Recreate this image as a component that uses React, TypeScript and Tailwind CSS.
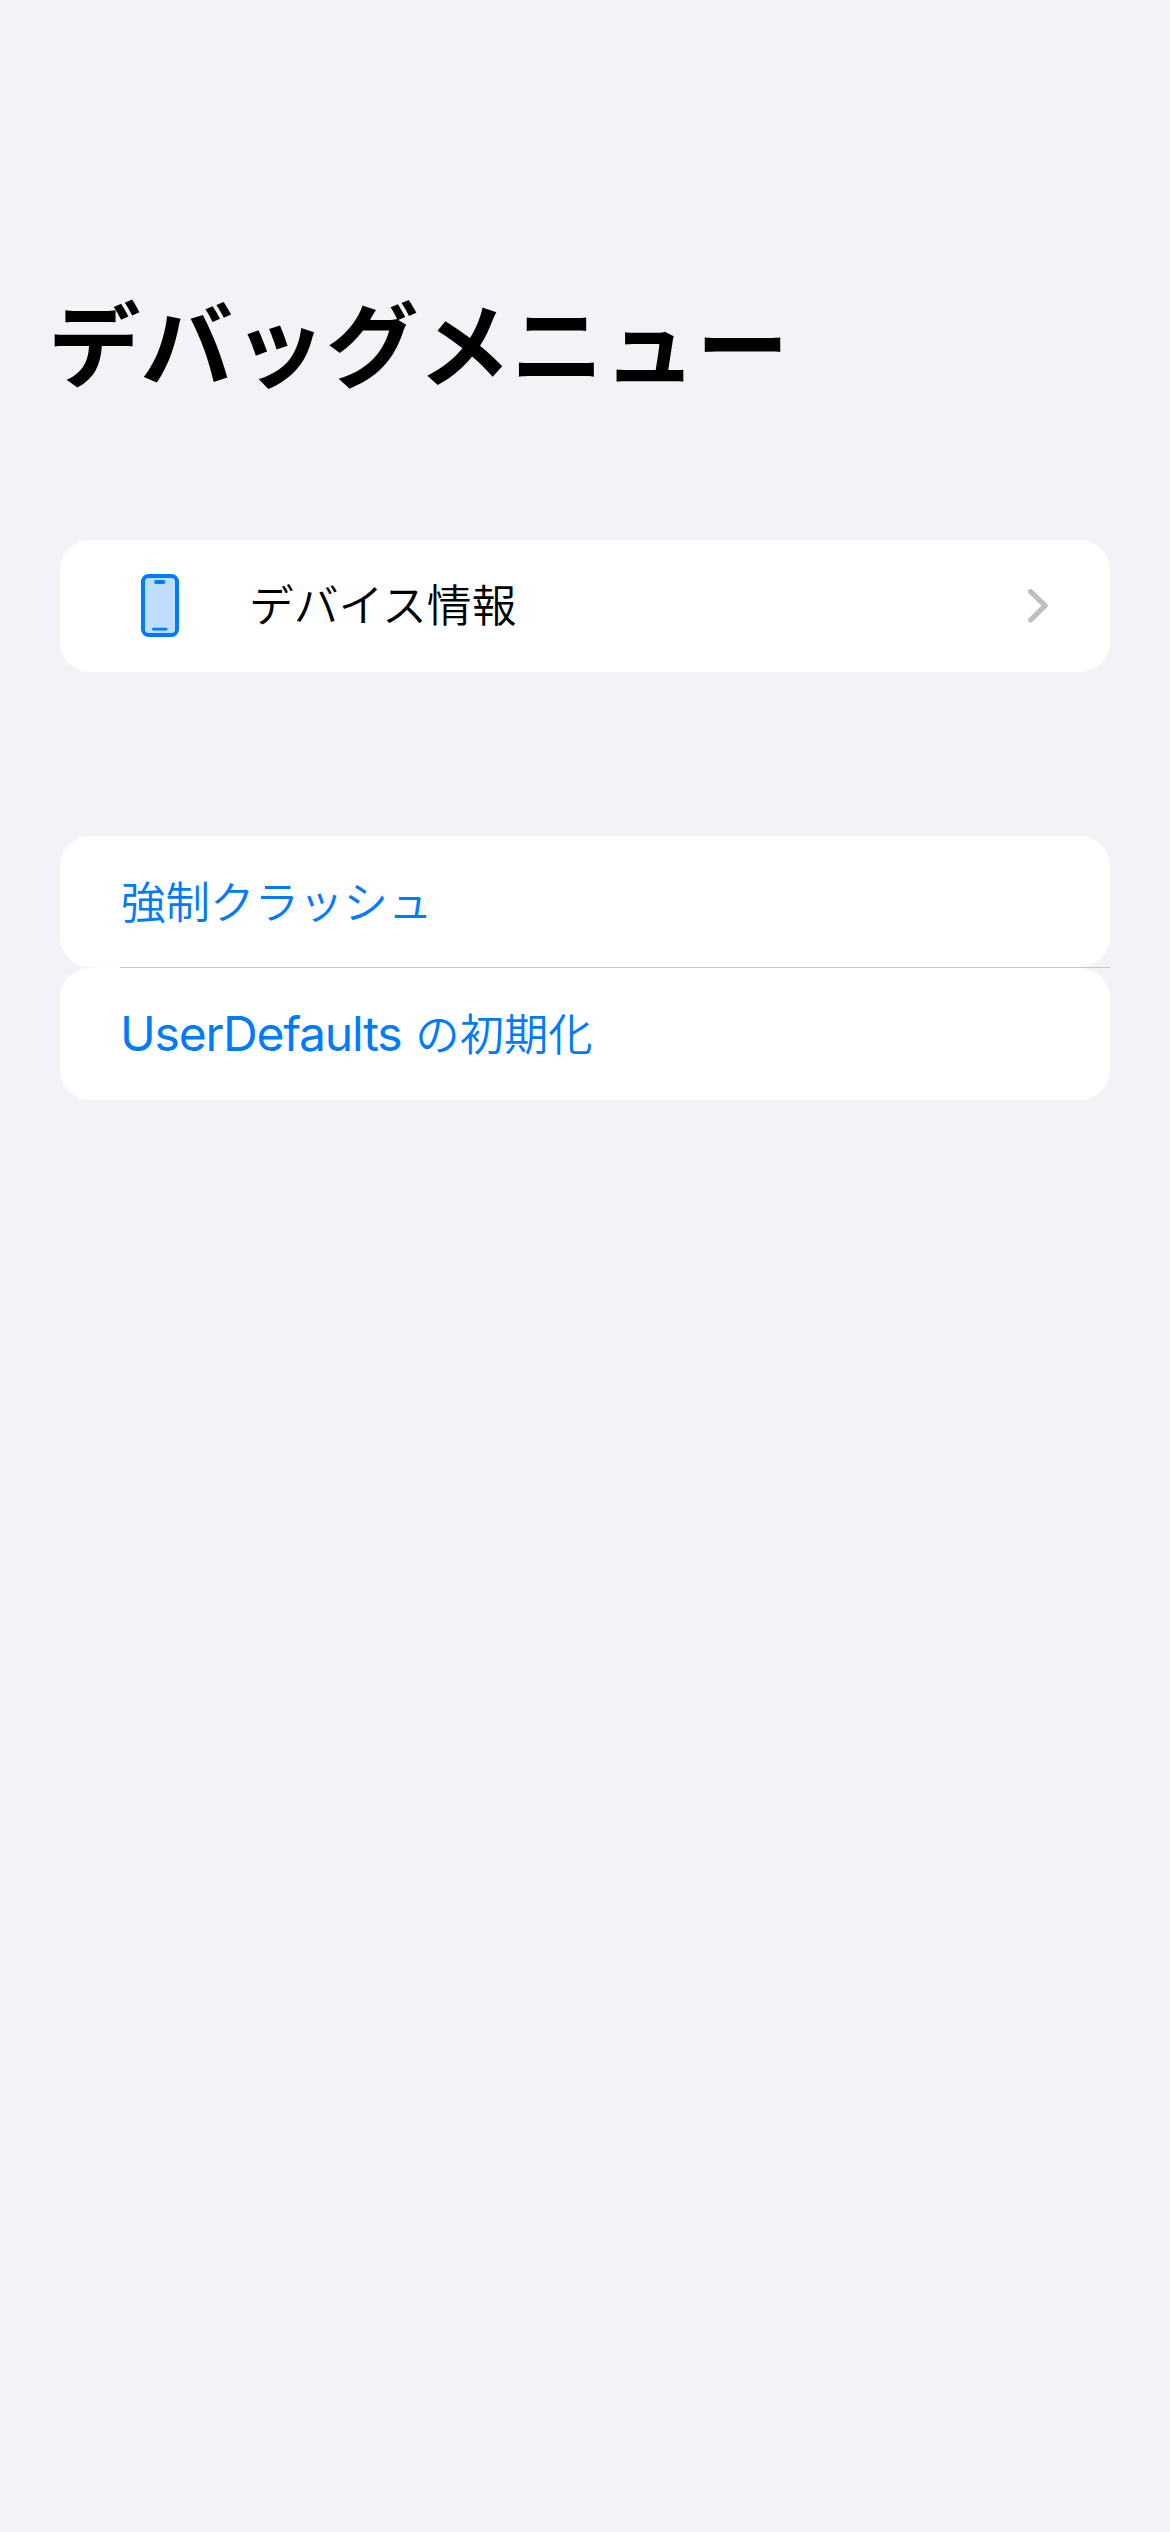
import React from "react";

function PhoneIcon() {
  return (
    <svg className="mb-[1px] block h-[63px] w-[38px]" viewBox="0 0 38 63" fill="none">
      <rect x="2" y="2" width="34" height="59" rx="5.5" fill="#bfdeff" stroke="#007aff" strokeWidth="4" />
      <path d="M15.1 8H22.4" stroke="#007aff" strokeWidth="4" strokeLinecap="round" />
      <path d="M12.4 55.2H25" stroke="#007aff" strokeWidth="2.8" strokeLinecap="round" />
    </svg>
  );
}

function Chevron() {
  return (
    <svg className="block h-[34px] w-[20px]" viewBox="0 0 20 34" fill="none">
      <path d="M2.6 2.5L17.1 16.7L2.6 31" stroke="#bfbfbf" strokeWidth="5.2" strokeLinecap="round" strokeLinejoin="round" />
    </svg>
  );
}

export default function App() {
  return (
    <div className="min-h-[2532px] w-full bg-[#f2f2f7] font-[Inter,'Noto_Sans_CJK_JP',sans-serif] text-black" lang="ja">
      <header className="flex h-[540px] items-start pl-[48px] pt-[279px]">
        <h1 className="whitespace-nowrap text-[92.6px] font-bold leading-[134px]">デバッグメニュー</h1>
      </header>
      <main className="px-[60px]">
        <section className="flex h-[132px] items-center rounded-[30px] bg-white pl-[81px] pr-[62px]">
          <PhoneIcon />
          <span className="ml-[70px] grow whitespace-nowrap pb-[1px] text-[44.8px] font-[350] leading-[66px]">デバイス情報</span>
          <Chevron />
        </section>
        <section className="mt-[164px]">
          <button className="flex h-[131px] w-full items-center rounded-[30px] bg-white pl-[61px] pt-[2px] text-[44.5px] font-[350] leading-[66px] text-[#007aff]">
            強制クラッシュ
          </button>
          <div className="flex h-px">
            <div className="ml-[34px] h-px w-[26px] bg-white/80" />
            <div className="h-px grow bg-[#c6c6c8]" />
          </div>
          <button className="flex h-[132px] w-full items-center rounded-[30px] bg-white pl-[60px] leading-[66px] text-[#007aff]">
            <span className="text-[48px] tracking-[-1.2px]">UserDefaults</span>
            <span className="ml-[14px] pt-[2px] text-[44.3px] font-[350]">の初期化</span>
          </button>
        </section>
      </main>
    </div>
  );
}
